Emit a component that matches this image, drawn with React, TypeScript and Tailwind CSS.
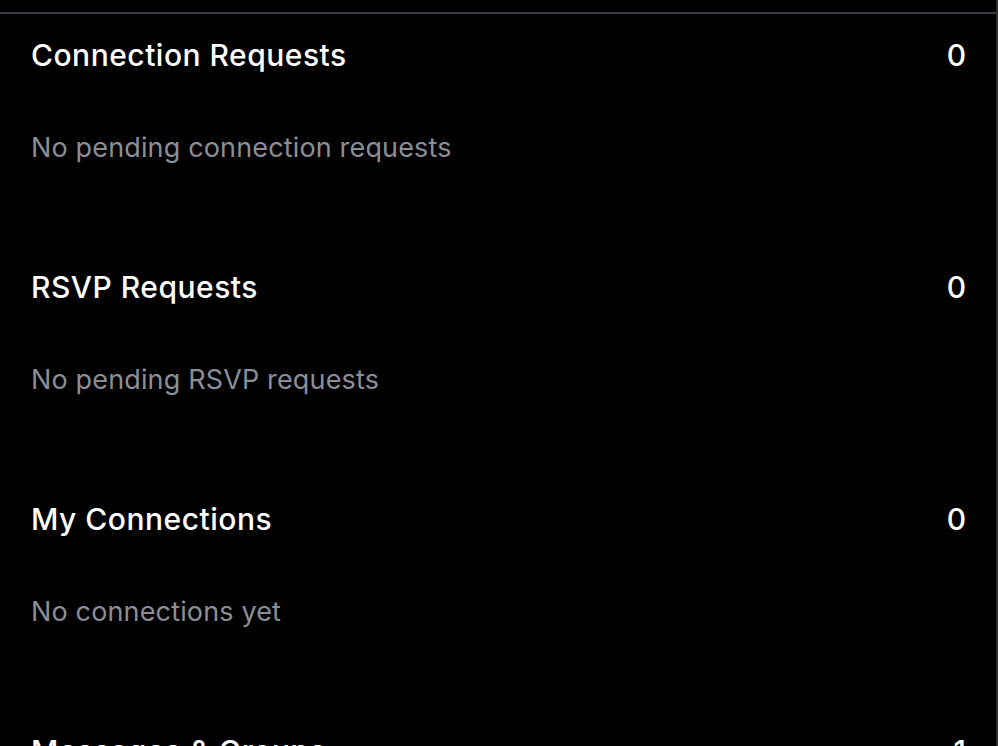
import React from "react";

const sections = [
  { title: "Connection Requests", count: "0", empty: "No pending connection requests" },
  { title: "RSVP Requests", count: "0", empty: "No pending RSVP requests" },
  { title: "My Connections", count: "0", empty: "No connections yet" },
  { title: "Messages & Groups", count: "1", empty: "" },
];

export default function App() {
  return (
    <div
      className="w-[998px] h-[746px] overflow-hidden bg-black flex"
      style={{ fontFamily: "Inter, 'Noto Sans', sans-serif" }}
    >
      <div className="w-[996px] flex flex-col">
        <div className="h-[12px] shrink-0" />
        <div className="border-t-2 border-[#3a3d45] flex flex-col pl-[31px] pr-[30px] pt-[23px]">
          {sections.map((s) => (
            <div key={s.title} className="flex flex-col h-[232px] shrink-0">
              <div className="flex items-center justify-between h-[36px] text-white text-[30px] font-medium">
                <span className="tracking-[0.5px]">{s.title}</span>
                <span>{s.count}</span>
              </div>
              {s.empty && (
                <div className="mt-[59px] h-[32px] flex items-center text-[27px] tracking-[0.15px] text-[#8b8e97]">
                  {s.empty}
                </div>
              )}
            </div>
          ))}
        </div>
      </div>
      <div className="w-[2px] bg-[#2c2c2e]" />
    </div>
  );
}
